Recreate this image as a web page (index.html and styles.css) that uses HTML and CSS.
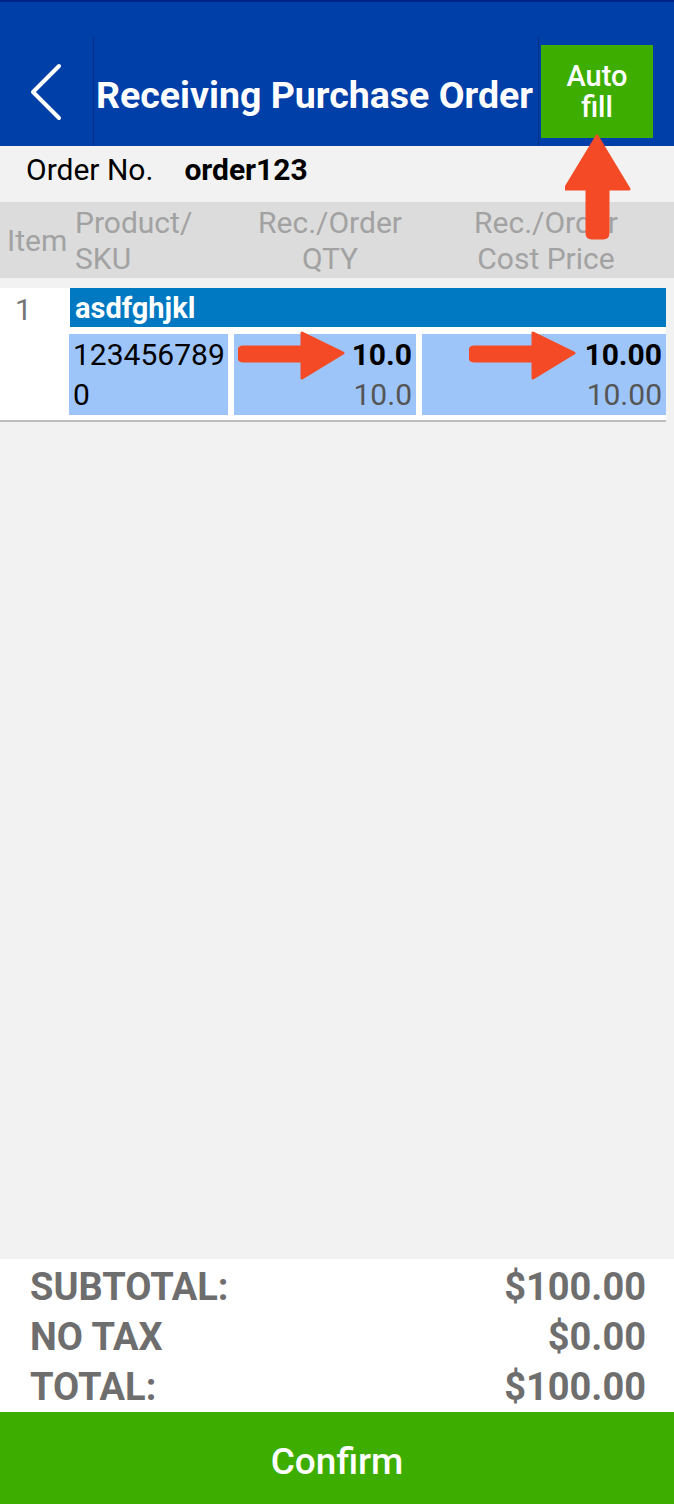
FILE: index.html
```html
<!DOCTYPE html>
<html lang="en">
<head>
<meta charset="utf-8">
<title>Receiving Purchase Order</title>
<link rel="stylesheet" href="styles.css">
</head>
<body>
<div class="page">
  <div class="status"></div>
  <header class="toolbar">
    <div class="back">
      <svg width="40" height="60" viewBox="0 0 40 60"><polyline points="29,3 3,29 29,55" fill="none" stroke="#fff" stroke-width="4" stroke-linecap="round" stroke-linejoin="round"/></svg>
    </div>
    <h1 class="title">Receiving Purchase Order</h1>
    <div class="action">
      <button class="autofill">Auto<br>fill</button>
    </div>
  </header>
  <div class="order-row">
    <span class="order-label">Order No.</span>
    <span class="order-value">order123</span>
  </div>
  <div class="thead">
    <div class="th th-item">Item</div>
    <div class="th th-prod">Product/<br>SKU</div>
    <div class="th th-num">Rec./Order<br>QTY</div>
    <div class="th th-num">Rec./Order<br>Cost Price</div>
  </div>
  <div class="rows">
    <div class="row">
      <div class="row-no">1</div>
      <div class="row-body">
        <div class="prod-name">asdfghjkl</div>
        <div class="cells">
          <div class="cell cell-sku">1234567890</div>
          <div class="cell cell-num"><b>10.0</b><span>10.0</span></div>
          <div class="cell cell-num"><b>10.00</b><span>10.00</span></div>
        </div>
      </div>
    </div>
  </div>
  <div class="spacer"></div>
  <div class="totals">
    <div class="tot"><span>SUBTOTAL:</span><span>$100.00</span></div>
    <div class="tot"><span>NO TAX</span><span>$0.00</span></div>
    <div class="tot"><span>TOTAL:</span><span>$100.00</span></div>
  </div>
  <button class="confirm">Confirm</button>

  <svg class="arrow arrow-up" width="70" height="110" viewBox="0 0 70 110"><path d="M32 2 L64 55 L43 55 L43 99 Q43 104 38 104 L27 104 Q22 104 22 99 L22 55 L0 55 Z" fill="#F44A25" stroke="#F44A25" stroke-width="3" stroke-linejoin="round"/></svg>
  <svg class="arrow arrow-r1" width="110" height="50" viewBox="0 0 110 50"><path d="M105 22 L64 2 L64 16 L5 16 Q1 16 1 20 L1 26 Q1 30 5 30 L64 30 L64 47 Z" fill="#F44A25" stroke="#F44A25" stroke-width="3" stroke-linejoin="round"/></svg>
  <svg class="arrow arrow-r2" width="110" height="50" viewBox="0 0 110 50"><path d="M105 22 L64 2 L64 16 L5 16 Q1 16 1 20 L1 26 Q1 30 5 30 L64 30 L64 47 Z" fill="#F44A25" stroke="#F44A25" stroke-width="3" stroke-linejoin="round"/></svg>
</div>
</body>
</html>
```
FILE: styles.css
```css
* { box-sizing: border-box; }
html, body { margin: 0; padding: 0; }
body { font-family: Roboto, "Noto Sans", sans-serif; background: #F2F2F2; }
.page {
  position: relative;
  width: 674px;
  height: 1504px;
  display: flex;
  flex-direction: column;
  background: #F2F2F2;
  overflow: hidden;
}
.status {
  height: 37px;
  background: #003EA8;
  border-top: 2px solid #00248A;
}
.toolbar {
  height: 109px;
  display: flex;
  background: #003EA8;
}
.back {
  width: 94px;
  flex: none;
  border-right: 1px solid #0A2F86;
  display: flex;
  align-items: center;
  padding-left: 30px;
}
.back svg { display: block; margin-top: 2px; }
.title {
  flex: 1;
  min-width: 0;
  margin: 0;
  padding: 6px 0 0 2px;
  color: #fff;
  font-size: 37.5px;
  font-weight: 700;
  white-space: nowrap;
  display: flex;
  align-items: center;
}
.action {
  flex: none;
  border-left: 1px solid #0A2F86;
  padding: 8px 21px 8px 2px;
  display: flex;
}
.autofill {
  width: 112px;
  border: 0;
  margin: 0;
  background: #3DAE00;
  color: #fff;
  font-family: Roboto, sans-serif;
  font-size: 29px;
  line-height: 31px;
  font-weight: 500;
  padding: 0;
}
.order-row {
  height: 56px;
  display: flex;
  align-items: center;
  padding: 0 0 10px 26px;
  font-size: 30px;
  color: #000;
  gap: 31px;
}
.order-value { font-weight: 700; }
.thead {
  height: 76px;
  background: #DCDCDC;
  display: grid;
  grid-template-columns: 69px 163px 196px 1fr;
  align-items: center;
  color: #A2A2A2;
  font-size: 30px;
  line-height: 36px;
  padding: 2px 10px 0 0;
}
.th-item { padding-left: 7px; }
.th-prod { padding-left: 6px; }
.th-num { text-align: center; white-space: nowrap; }
.rows { padding-top: 10px; }
.row {
  width: 666px;
  background: #fff;
  display: flex;
  border-bottom: 2px solid #BDBDBD;
  padding-bottom: 6px;
}
.row-no {
  width: 69px;
  padding-left: 15px;
  padding-top: 4px;
  font-size: 30px;
  color: #757575;
}
.row-body { flex: 1; display: flex; flex-direction: column; gap: 7px; }
.prod-name {
  height: 39px;
  background: #0079C2;
  color: #fff;
  font-weight: 700;
  font-size: 29px;
  line-height: 41px;
  padding-left: 5px;
  margin-left: 1px;
}
.cells {
  display: grid;
  grid-template-columns: 159px 182px 1fr;
  gap: 6px;
  height: 80px;
}
.cell {
  background: #9EC5FA;
  font-size: 30px;
  line-height: 40px;
  padding: 1px 4px 0 4px;
  color: #000;
}
.cell-sku { word-break: break-all; padding-right: 0; }
.cell-num { display: flex; flex-direction: column; align-items: flex-end; }
.cell-num b { font-weight: 700; }
.cell-num span { color: #555; }
.spacer { flex: 1; }
.totals {
  background: #fff;
  padding: 3px 28px 0 30px;
}
.tot {
  height: 50px;
  display: flex;
  justify-content: space-between;
  align-items: center;
  font-size: 38px;
  font-weight: 700;
  color: #6E6E6E;
}
.confirm {
  height: 92px;
  border: 0;
  margin: 0;
  padding: 6px 0 0;
  background: #3DAE00;
  color: #fff;
  font-family: Roboto, sans-serif;
  font-size: 37px;
  font-weight: 500;
  width: 100%;
}
.arrow { position: absolute; display: block; }
.arrow-up { left: 565px; top: 134px; }
.arrow-r1 { left: 238px; top: 331px; }
.arrow-r2 { left: 469px; top: 331px; }
```
